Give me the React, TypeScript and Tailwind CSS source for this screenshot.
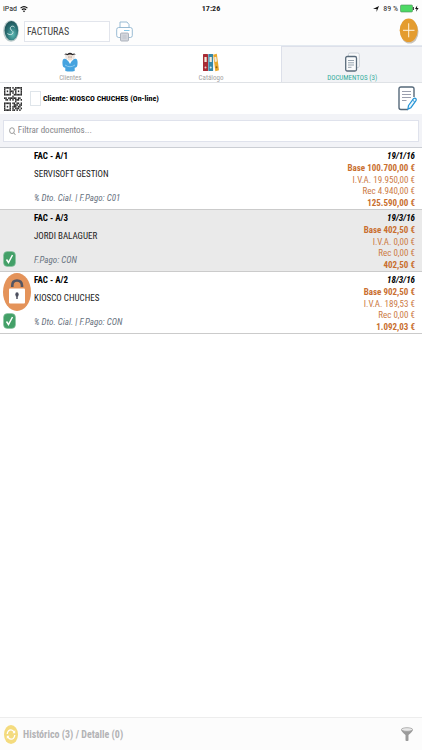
import { useState } from "react";

type Invoice = {
  id: string;
  date: string;
  client: string;
  note: string;
  base: string;
  iva: string;
  rec: string;
  total: string;
  checked?: boolean;
  locked?: boolean;
  selected?: boolean;
};

const invoices: Invoice[] = [
  {
    id: "FAC - A/1",
    date: "19/1/16",
    client: "SERVISOFT GESTION",
    note: "% Dto. Cial. | F.Pago: C01",
    base: "Base 100.700,00 €",
    iva: "I.V.A. 19.950,00 €",
    rec: "Rec 4.940,00 €",
    total: "125.590,00 €",
  },
  {
    id: "FAC - A/3",
    date: "19/3/16",
    client: "JORDI BALAGUER",
    note: "F.Pago: CON",
    base: "Base 402,50 €",
    iva: "I.V.A. 0,00 €",
    rec: "Rec 0,00 €",
    total: "402,50 €",
    checked: true,
    selected: true,
  },
  {
    id: "FAC - A/2",
    date: "18/3/16",
    client: "KIOSCO CHUCHES",
    note: "% Dto. Cial. | F.Pago: CON",
    base: "Base 902,50 €",
    iva: "I.V.A. 189,53 €",
    rec: "Rec 0,00 €",
    total: "1.092,03 €",
    checked: true,
    locked: true,
  },
];

function StatusBar() {
  return (
    <div className="grid h-[17px] grid-cols-3 items-center pr-[3px] pl-[3px] text-[8px] leading-[10px] text-[#222]">
      <div className="flex items-center gap-[3px]">
        <span>iPad</span>
        <svg viewBox="0 0 14 14" className="h-[8px] w-[8px]" fill="none" stroke="#111" strokeWidth="2">
          <path d="M1 5.5Q7 0 13 5.5M3.4 8.3Q7 5 10.6 8.3" />
          <path d="M5 10.3Q7 8.7 9 10.3L7 12.8Z" fill="#111" stroke="none" />
        </svg>
      </div>
      <span className="text-center font-bold">17:26</span>
      <div className="flex items-center justify-end gap-[2px]">
        <svg viewBox="0 0 10 10" className="mr-[2px] h-[6px] w-[6px]">
          <path d="M10 0 6 10V5H0Z" fill="#111" />
        </svg>
        <span>89 %</span>
        <svg viewBox="0 0 19 9" className="h-[9px] w-[19px]">
          <rect x="0.5" y="1" width="12" height="7" rx="1" fill="#4cd964" stroke="#4e8b59" strokeWidth="0.6" />
          <path d="M13.4 3v3" stroke="#333" />
          <path d="M17.2 1.5 15 5h1.6L16 7.8 18.6 4H17Z" fill="#111" />
        </svg>
      </div>
    </div>
  );
}

function LogoIcon() {
  return (
    <svg viewBox="0 0 16 22" className="h-[22px] w-[16px]">
      <defs>
        <radialGradient id="logo" cx="0.6" cy="0.7" r="0.7">
          <stop offset="0" stopColor="#5cbab5" />
          <stop offset="0.6" stopColor="#2b7175" />
          <stop offset="1" stopColor="#1f5358" />
        </radialGradient>
      </defs>
      <ellipse cx="8" cy="11" rx="7.8" ry="10.8" fill="#b9c9ca" />
      <ellipse cx="8.4" cy="10.6" rx="6.8" ry="9.6" fill="url(#logo)" />
      <path d="M11.5 7.2C10 5.2 6.8 6.4 7.4 8.8c.5 1.9 3 1.9 2.6 4-.4 2.1-3.6 2.4-5.6.8" fill="none" stroke="#c9e4e3" strokeWidth="1" />
    </svg>
  );
}

function PrinterIcon() {
  return (
    <svg viewBox="0 0 17 21" className="h-[21px] w-[17px]" fill="#fff" stroke="#8fb4cf" strokeWidth="0.9">
      <path d="M4 7V1h7l2 2.5V7" />
      <rect x="0.7" y="6.5" width="15.6" height="10" rx="2" />
      <path d="M8 9.5h5.5" stroke="#7cc4e8" />
      <rect x="4.5" y="12" width="8" height="8" rx="1" fill="#d3d6dc" stroke="#a7aeb8" />
      <path d="M6.5 15h4M6.5 17h4" stroke="#b5bac4" strokeWidth="0.7" />
    </svg>
  );
}

function AddIcon() {
  return (
    <svg viewBox="0 0 20 26" className="h-[26px] w-[20px]">
      <ellipse cx="10.5" cy="13.8" rx="9" ry="11.8" fill="#c9c3ba" />
      <ellipse cx="9.7" cy="12.3" rx="9" ry="11.8" fill="#e49c2f" />
      <path d="M9.7 5.3v14M4 12.3h11.5" stroke="#fff4de" strokeWidth="1" />
    </svg>
  );
}

function ClientsIcon() {
  return (
    <svg viewBox="0 0 16 20" className="h-[20px] w-[16px]">
      <path d="M.5 12q-.5-5 2-5.300 2-.2 3 1.800L8 10l2.500-1.500q1-2 3-1.800 2.500.3 2 5.300 0 3.500-2.800 3.800V19q-4.700 1.200-9.400 0v-3.200Q.5 15.500.5 12Z" fill="#46a3df" />
      <path d="M3 13q5 3.500 10 0" fill="none" stroke="#8ccaf0" />
      <path d="M3 2.500h2.500V7H3.500ZM10.500 2.500H13L12.500 7h-2Z" fill="#ece6e2" />
      <ellipse cx="8" cy="5.500" rx="2.500" ry="3.500" fill="#eee0d5" />
      <path d="M6 8.500 8 12l2-3.500Z" fill="#fff" />
      <path d="M2.300 2.800Q3.500.8 5.300 2 8-.5 10.700 2q1.800-1.200 3 .8-1.500-.6-3 .4Q8 2 5.300 3.200q-1.500-1-3-.4Z" fill="#272324" />
      <path d="M6.500 5h.8M8.700 5h.8" stroke="#5e4d46" strokeWidth="0.800" />
    </svg>
  );
}

function CatalogIcon() {
  return (
    <svg viewBox="0 0 16 19" className="h-[19px] w-[16px]">
      <rect x="0" y="1" width="5" height="17" rx="0.5" fill="#a82b35" />
      <rect x="5.3" y="1" width="4.8" height="17" rx="0.5" fill="#3688a8" />
      <path d="M10.200 1.800 13.800.8 16 17.300 12.300 18.200Z" fill="#e9a72b" />
      <path d="M1.400 4h2.300v5H1.400ZM6.500 4h2.300v5H6.500ZM11.200 4.300 13.300 3.800 14 8.500 11.900 9Z" fill="#f2e8d8" />
      <circle cx="2.5" cy="14.5" r="1" fill="#e8c9c9" />
      <circle cx="7.7" cy="14.5" r="1" fill="#d2e7ee" />
      <circle cx="13.5" cy="14.2" r="1" fill="#99600e" />
    </svg>
  );
}

function DocumentsIcon() {
  return (
    <svg viewBox="0 0 15 20" className="h-[20px] w-[15px]" fill="#fafbfc">
      <rect x="3.5" y="1" width="10.8" height="14.5" rx="1.5" stroke="#c3c9d0" strokeWidth="0.8" />
      <rect x="0.7" y="4.5" width="10.8" height="14.5" rx="1.5" stroke="#5a6b7b" strokeWidth="1.3" />
      <path d="M3 8.5h6M3 10.8h6M3 13h6M3 15.3h3.5" stroke="#8c98a6" strokeWidth="0.9" />
    </svg>
  );
}

const qrRows = [
  "1111101011111",
  "1000100110001",
  "1010111010101",
  "1000101010001",
  "1111100111111",
  "0000001000000",
  "1101111110110",
  "0110101011101",
  "0000000010000",
  "1111101101101",
  "1000100111011",
  "1010101110110",
  "1000101011101",
  "1111101101010",
];

function QrIcon() {
  return (
    <svg viewBox="0 0 13 14" preserveAspectRatio="none" className="h-[24px] w-[18px]">
      {qrRows.map((row, y) =>
        row.split("").map((cell, x) => (cell === "1" ? <rect key={`${x}-${y}`} x={x} y={y} width="1" height="1" fill="#2c2c2c" /> : null)),
      )}
    </svg>
  );
}

function EditIcon() {
  return (
    <svg viewBox="0 0 19 25" className="h-[25px] w-[19px]" fill="none">
      <path d="M16 11V3q0-2-2-2H3Q1 1 1 3v18.5q0 2 2 2h7" stroke="#56697a" strokeWidth="1.4" />
      <path d="M4 5.5h9M4 8.5h9M4 11.5h9M4 14.5h4.5" stroke="#9a9fae" strokeWidth="1.1" />
      <path d="m10.5 19.5 5-6.8q1.2-1.2 2.2-.2t.1 2.4l-4.9 6.8-3 1.4Z" fill="#eaf6fd" stroke="#2594d6" strokeWidth="1.2" />
      <path d="m14.6 14 2.2 2.2" stroke="#2594d6" />
    </svg>
  );
}

function CheckIcon() {
  return (
    <svg viewBox="0 0 13 16" className="h-[16px] w-[13px]">
      <rect x="0.5" y="0.5" width="12" height="15" rx="4" fill="#43a068" stroke="#8cc5a1" strokeWidth="0.6" />
      <path d="m3.5 8.5 2 3L9.5 4" fill="none" stroke="#fff" strokeWidth="1.5" />
    </svg>
  );
}

function LockIcon() {
  return (
    <svg viewBox="0 0 28 38" className="h-[38px] w-[28px]">
      <ellipse cx="14" cy="19" rx="14" ry="19" fill="#e4935a" />
      <path d="M9.3 14V12.500Q9.300 7.500 14 7.500t5 5v1.500" fill="none" stroke="#535563" strokeWidth="2.6" />
      <rect x="6" y="15.5" width="16" height="15" rx="1" fill="#fff" />
      <ellipse cx="14" cy="21.5" rx="1.7" ry="2.2" fill="#4c4f5e" />
      <path d="M14 22v4" stroke="#4c4f5e" strokeWidth="1.5" />
    </svg>
  );
}

function SyncIcon() {
  return (
    <svg viewBox="0 0 14 19" className="h-[19px] w-[14px]">
      <ellipse cx="7" cy="9.5" rx="7" ry="9.5" fill="#f4db7e" />
      <path d="M3.2 9q.5-4.2 3.8-4.2 2 0 3 2.2M10.8 10q-.5 4.2-3.8 4.2-2 0-3-2.2" fill="none" stroke="#fff" strokeWidth="1.3" />
      <path d="M11.2 5v3.3H8.5ZM2.8 14v-3.3h2.7Z" fill="#fff" />
    </svg>
  );
}

function FilterIcon() {
  return (
    <svg viewBox="0 0 12 15" className="h-[15px] w-[12px]">
      <path d="M0 2.5Q0 4 4.5 8v5.5q1.5 1 3 0V8Q12 4 12 2.5Z" fill="#9b9b9b" />
      <ellipse cx="6" cy="2.5" rx="5.6" ry="1.8" fill="#e8e8e8" stroke="#a2a2a2" strokeWidth="0.8" />
    </svg>
  );
}

function InvoiceRow({ invoice }: { invoice: Invoice }) {
  return (
    <li className={`flex h-[62px] border-b border-[#cbcbcb] text-[9px] leading-[12px] text-[#222] ${invoice.selected ? "bg-[#eaeaea]" : "bg-white"}`}>
      <div className="flex w-[34px] shrink-0 flex-col justify-end gap-[2px] pb-[4px] pl-[3px]">
        {invoice.locked && <LockIcon />}
        {invoice.checked && <CheckIcon />}
      </div>
      <div className="flex min-w-0 flex-1 flex-col pt-[2px] pb-[5px]">
        <h2 className="font-bold text-black">{invoice.id}</h2>
        <p className="mt-[6px]">{invoice.client}</p>
        <p className="mt-auto text-[#687280] italic">{invoice.note}</p>
      </div>
      <div className="flex flex-col pt-[2px] pr-[7px] text-right text-[#cc7a45]">
        <time className="font-bold text-black italic">{invoice.date}</time>
        <span className="font-bold text-[#c96f2f]">{invoice.base}</span>
        <span>{invoice.iva}</span>
        <span className="leading-[11px]">{invoice.rec}</span>
        <span className="font-bold text-[#c96f2f]">{invoice.total}</span>
      </div>
    </li>
  );
}

export default function App() {
  const [section, setSection] = useState("FACTURAS");
  const [query, setQuery] = useState("");

  return (
    <div className="flex min-h-screen flex-col bg-white font-['Roboto_Condensed',Roboto,sans-serif]">
      <header className="bg-[#fdfdfd]">
        <StatusBar />
        <div className="flex h-[29px] items-center border-b border-[#e3e9f0] px-[3px]">
          <LogoIcon />
          <input
            aria-label="Documento"
            value={section}
            onChange={(event) => setSection(event.target.value)}
            className="ml-[5px] h-[21px] w-[86px] border border-[#e2e5ec] bg-white px-[2px] text-[10px] text-[#444] outline-none"
          />
          <button type="button" aria-label="Imprimir" className="ml-[6px]">
            <PrinterIcon />
          </button>
          <button type="button" aria-label="Añadir" className="ml-auto">
            <AddIcon />
          </button>
        </div>
      </header>

      <nav className="grid h-[37px] grid-cols-3 border-b border-[#dfe2e6] text-[7px] leading-[8px] text-[#a3a3a3]">
        <button type="button" className="flex flex-col items-center justify-end gap-[2px]">
          <ClientsIcon />
          Clientes
        </button>
        <button type="button" className="flex flex-col items-center justify-end gap-[2px]">
          <CatalogIcon />
          Catálogo
        </button>
        <button type="button" className="flex flex-col items-center justify-end gap-[2px] border-t border-l border-[#dde0ea] bg-[#f2f3f6] text-[#35ad9d]">
          <DocumentsIcon />
          DOCUMENTOS (3)
        </button>
      </nav>

      <div className="flex h-[31px] items-center pr-[5px] pl-[4px]">
        <QrIcon />
        <label className="ml-[8px] flex items-center gap-[2px] text-[8px] font-bold text-black">
          <input type="checkbox" className="h-[15px] w-[11px] appearance-none border border-[#dfe5ea] bg-white" />
          Cliente: KIOSCO CHUCHES (On-line)
        </label>
        <button type="button" aria-label="Editar" className="ml-auto">
          <EditIcon />
        </button>
      </div>

      <div className="border-b border-[#cbced4] bg-[#f2f3f7] px-[3px] pt-[6px] pb-[5px]">
        <label className="flex h-[22px] items-center gap-[2px] border border-[#dfe2ec] bg-white px-[5px]">
          <svg viewBox="0 0 8 10" className="h-[9px] w-[7px]" fill="none" stroke="#8a8a8a">
            <ellipse cx="3.5" cy="4" rx="2.8" ry="3.4" />
            <path d="m5.5 6.5 2 2.5" />
          </svg>
          <input
            aria-label="Filtrar documentos"
            placeholder="Filtrar documentos..."
            value={query}
            onChange={(event) => setQuery(event.target.value)}
            className="w-full text-[9px] outline-none placeholder:text-[#85858a]"
          />
        </label>
      </div>

      <ul>
        {invoices.map((invoice) => (
          <InvoiceRow key={invoice.id} invoice={invoice} />
        ))}
      </ul>

      <footer className="mt-auto flex h-[33px] items-center border-t border-[#ededed] bg-[#fcfcfc] pr-[9px] pl-[4px]">
        <button type="button" aria-label="Sincronizar">
          <SyncIcon />
        </button>
        <span className="ml-[5px] text-[10px] font-bold text-[#b3b3b5]">Histórico (3) / Detalle (0)</span>
        <button type="button" aria-label="Filtrar" className="ml-auto">
          <FilterIcon />
        </button>
      </footer>
    </div>
  );
}
